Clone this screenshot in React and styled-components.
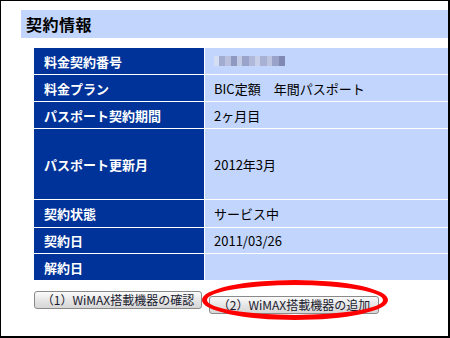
import React from 'react'
import styled, { createGlobalStyle } from 'styled-components'

const GlobalStyle = createGlobalStyle`
html, body {
  margin: 0;
  padding: 0;
  background: #ffffff;
}
body {
  font-family: "Noto Sans CJK JP", "DejaVu Sans", sans-serif;
}
`

const rows = [
  { label: '料金契約番号', value: null, height: 26 },
  { label: '料金プラン', value: 'BIC定額　年間パスポート', height: 26 },
  { label: 'パスポート契約期間', value: '2ヶ月目', height: 26 },
  { label: 'パスポート更新月', value: '2012年3月', height: 70 },
  { label: '契約状態', value: 'サービス中', height: 27 },
  { label: '契約日', value: '2011/03/26', height: 25 },
  { label: '解約日', value: '', height: 26 },
]

const App = () => (
  <>
    <GlobalStyle />
    <Frame>
      <TitleBar>契約情報</TitleBar>
      <InfoGrid>
        {rows.map((row) => (
          <React.Fragment key={row.label}>
            <Label style={{ height: row.height }}>{row.label}</Label>
            <Value style={{ height: row.height }}>
              {row.value === null ? <Blurred /> : row.value}
            </Value>
          </React.Fragment>
        ))}
      </InfoGrid>
      <ButtonRow>
        <Button>（1）WiMAX搭載機器の確認</Button>
        <Highlighted>
          <Button wide>（2）WiMAX搭載機器の追加</Button>
          <RedRing />
        </Highlighted>
      </ButtonRow>
    </Frame>
  </>
)

const Frame = styled.div`
box-sizing:border-box;
width:450px;
height:338px;
border-left:1px solid #000;
border-top:1px solid #000;
border-right:2px solid #000;
border-bottom:2px solid #000;
padding-top:9px;
padding-left:20px;
overflow:hidden;
`

const TitleBar = styled.div`
height:28px;
background:#c2d5fc;
display:flex;
align-items:center;
padding-left:5px;
font-size:16px;
font-weight:700;
color:#000;
letter-spacing:0.5px;
`

const InfoGrid = styled.div`
margin-top:10px;
margin-left:13px;
display:grid;
grid-template-columns:170px 1fr;
gap:1px;
background:#ffffff;
`

const Label = styled.div`
background:#003399;
color:#ffffff;
font-weight:700;
font-size:13px;
display:flex;
align-items:center;
padding-left:10px;
`

const Value = styled.div`
background:#c2d5fc;
color:#000;
font-size:13px;
display:flex;
align-items:center;
padding-left:9px;
`

const Blurred = styled.span`
display:inline-block;
width:78px;
height:10px;
background:linear-gradient(90deg,
  #d6def4 0 5px, #a2acd0 5px 11px, #b8c0de 11px 17px, #8e98c0 17px 23px,
  #c2cae6 23px 28px, #9aa4ca 28px 35px, #b0b9da 35px 41px, #c8cfe8 41px 46px,
  #a8b1d4 46px 53px, #bcc4e0 53px 58px, #99a2c8 58px 65px, #7f89b4 65px 71px,
  #c2d5fc 71px 78px);
`

const ButtonRow = styled.div`
margin-top:11px;
margin-left:13px;
display:flex;
gap:7px;
`

const Highlighted = styled.div`
position:relative;
`

const Button = styled.button`
box-sizing:border-box;
width:${(p) => (p.wide ? '170px' : '168px')};
height:18px;
padding:0;
border:1px solid #8a8a8a;
border-radius:3px;
background:linear-gradient(#fbfbfb, #e4e4e4 55%, #d6d6d6);
font-family:"Noto Sans CJK JP", "DejaVu Sans", sans-serif;
font-size:12px;
color:#1a1a2e;
line-height:16px;
white-space:nowrap;
`

const RedRing = styled.div`
position:absolute;
left:-7px;
top:-11px;
width:186px;
height:40px;
box-sizing:border-box;
border:5px solid #ff0000;
border-radius:50%;
pointer-events:none;
`

export default App
